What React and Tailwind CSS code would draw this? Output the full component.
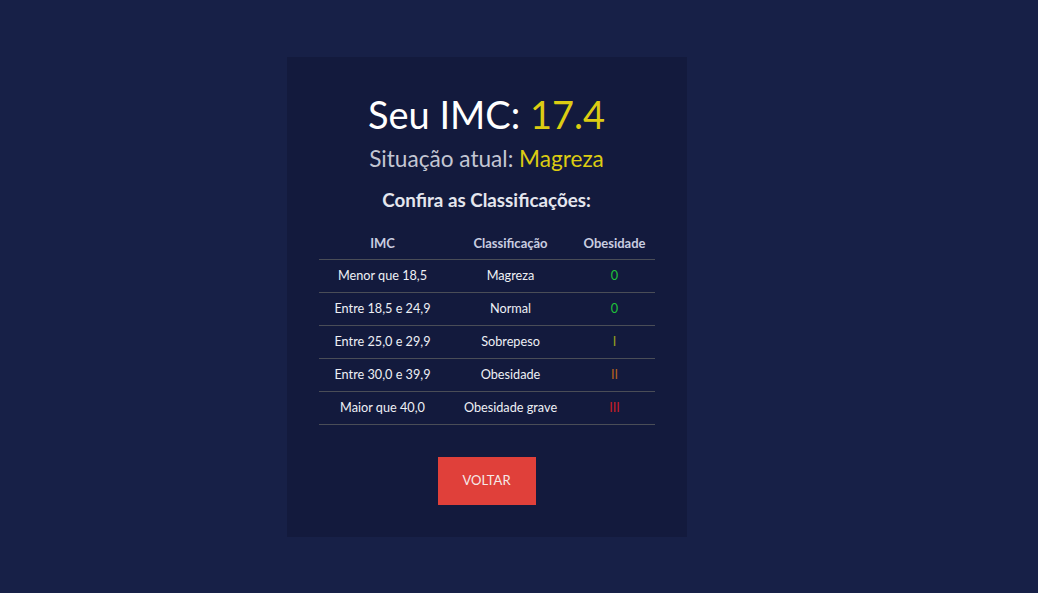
import React from 'react'

const rows = [
  { imc: 'Menor que 18,5', cls: 'Magreza', ob: '0', color: 'text-[#1fc23a]' },
  { imc: 'Entre 18,5 e 24,9', cls: 'Normal', ob: '0', color: 'text-[#1fc23a]' },
  { imc: 'Entre 25,0 e 29,9', cls: 'Sobrepeso', ob: 'I', color: 'text-[#9aa51e]' },
  { imc: 'Entre 30,0 e 39,9', cls: 'Obesidade', ob: 'II', color: 'text-[#b8621c]' },
  { imc: 'Maior que 40,0', cls: 'Obesidade grave', ob: 'III', color: 'text-[#c81e24]' },
]

const App = () => {
  return (
    <div className="min-h-[593px] w-full bg-[#172047] flex justify-center pr-[65px] pt-[57px] font-['Lato',sans-serif]">
      <div className="w-[400px] h-[480px] bg-[#131a3d] flex flex-col items-center pt-[33px]">
        <h1 className="text-[38px] leading-[48px] text-white font-normal">
          Seu IMC: <span className="text-[#dccc12]">17.4</span>
        </h1>
        <h2 className="text-[22.6px] leading-[28px] text-[#c3c6d3] mt-[7px]">
          Situação atual: <span className="text-[#dccc12]">Magreza</span>
        </h2>
        <h3 className="text-[18.8px] leading-[24px] font-bold text-[#e4e6ee] mt-[15px]">
          Confira as Classificações:
        </h3>
        <table className="w-[336px] mt-[12px] text-[12.7px] border-collapse">
          <thead>
            <tr className="border-b border-[#4a4d57] h-[35px]">
              <th className="w-[128px] pt-[4px] font-bold text-[13px] text-[#c9cde0]">IMC</th>
              <th className="w-[128px] pt-[4px] font-bold text-[13px] text-[#c9cde0]">Classificação</th>
              <th className="w-[80px] pt-[4px] font-bold text-[13px] text-[#c9cde0]">Obesidade</th>
            </tr>
          </thead>
          <tbody>
            {rows.map((r) => (
              <tr key={r.imc} className="border-b border-[#4a4d57] h-[33px]">
                <td className="text-center text-[#eef0f5]">{r.imc}</td>
                <td className="text-center text-[#eef0f5]">{r.cls}</td>
                <td className={`text-center ${r.color}`}>{r.ob}</td>
              </tr>
            ))}
          </tbody>
        </table>
        <button className="mt-[32px] w-[98px] h-[48px] bg-[#e0403a] text-[#f5e9e8] text-[13px]">
          VOLTAR
        </button>
      </div>
    </div>
  )
}

export default App
